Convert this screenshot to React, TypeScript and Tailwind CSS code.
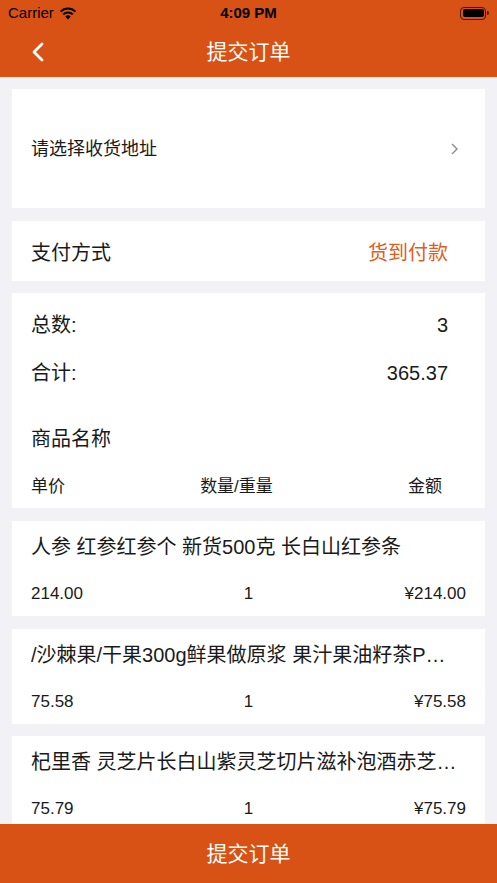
import React from 'react';

type Item = {
  name: string;
  price: string;
  qty: string;
  total: string;
  gap: string;
};

const items: Item[] = [
  { name: '人参 红参红参个 新货500克 长白山红参条', price: '214.00', qty: '1', total: '¥214.00', gap: 'mt-[13px]' },
  { name: '/沙棘果/干果300g鲜果做原浆 果汁果油籽茶P沙棘果原浆', price: '75.58', qty: '1', total: '¥75.58', gap: 'mt-[13px]' },
  { name: '杞里香 灵芝片长白山紫灵芝切片滋补泡酒赤芝片礼盒装', price: '75.79', qty: '1', total: '¥75.79', gap: 'mt-[12px]' },
];

const font = { fontFamily: '"Liberation Sans", "Noto Sans CJK SC", sans-serif' };

const StatusBar: React.FC = () => (
  <div className="relative flex h-[26px] items-center px-[8px] text-[15px] text-black">
    <div className="flex items-center gap-[5px]">
      <span>Carrier</span>
      <svg width="18" height="13" viewBox="0 0 18 13">
        <path d="M9 12.5 L6.3 9.6 A3.9 3.9 0 0 1 11.7 9.6 Z" fill="#000" />
        <path d="M4.2 7.4 A6.8 6.8 0 0 1 13.8 7.4" stroke="#000" strokeWidth="2" fill="none" />
        <path d="M1.6 4.6 A10.5 10.5 0 0 1 16.4 4.6" stroke="#000" strokeWidth="2" fill="none" />
      </svg>
    </div>
    <span className="absolute left-1/2 -translate-x-1/2 font-bold">4:09 PM</span>
    <div className="ml-auto flex items-center">
      <div className="flex h-[13px] w-[26px] items-center rounded-[4px] border border-[#3a1a08] p-[1.5px]">
        <div className="h-full w-full rounded-[2px] bg-black" />
      </div>
      <div className="ml-[1px] h-[4px] w-[2px] rounded-r-sm bg-[#3a1a08]" />
    </div>
  </div>
);

const App: React.FC = () => {
  return (
    <div className="flex h-[883px] w-[497px] flex-col overflow-hidden bg-[#f1f1f6]" style={font}>
      <div className="bg-[#d75214]">
        <StatusBar />
        <div className="relative flex h-[51px] items-center justify-center">
          <svg className="absolute left-[31px]" width="14" height="22" viewBox="0 0 14 22">
            <path d="M11 3 L3 11 L11 19" stroke="#fff" strokeWidth="2.8" fill="none" strokeLinecap="round" strokeLinejoin="round" />
          </svg>
          <span className="text-[21px] text-white">提交订单</span>
        </div>
      </div>

      <div className="flex flex-1 flex-col overflow-hidden px-[12px] text-[#1a1a1a]">
        <div className="mt-[12px] flex h-[119px] shrink-0 items-center justify-between bg-white pl-[19px] pr-[26px]">
          <span className="pt-[2px] text-[18px]">请选择收货地址</span>
          <svg width="9" height="14" viewBox="0 0 9 14">
            <path d="M2 2 L7 7 L2 12" stroke="#8a8a8e" strokeWidth="1.4" fill="none" />
          </svg>
        </div>

        <div className="mt-[13px] flex h-[60px] shrink-0 items-center justify-between bg-white pl-[19px] pr-[37px] pt-[3px] text-[20px]">
          <span>支付方式</span>
          <span className="text-[#e05d21]">货到付款</span>
        </div>

        <div className="mt-[12px] flex h-[215px] shrink-0 flex-col bg-white pl-[19px] pr-[37px] pt-[8px]">
          <div className="flex h-[48px] items-center justify-between text-[20px]">
            <span>总数:</span>
            <span>3</span>
          </div>
          <div className="flex h-[48px] items-center justify-between text-[20px]">
            <span>合计:</span>
            <span>365.37</span>
          </div>
          <div className="mt-[18px] flex h-[48px] items-center text-[20px]">商品名称</div>
          <div className="grid h-[45px] grid-cols-3 items-center pr-[6px] pt-[3px] text-[17px]">
            <span>单价</span>
            <span className="text-center">数量/重量</span>
            <span className="text-right">金额</span>
          </div>
        </div>

        {items.map((it) => (
          <div key={it.total} className={`${it.gap} flex h-[95px] shrink-0 flex-col bg-white pl-[19px] pr-[19px]`}>
            <div className="flex h-[48px] items-center pr-[9px] pt-[3px] text-[20px]">
              <span className="truncate">{it.name}</span>
            </div>
            <div className="grid h-[47px] grid-cols-3 items-center pt-[3px] text-[17px]">
              <span>{it.price}</span>
              <span className="text-center">{it.qty}</span>
              <span className="text-right">{it.total}</span>
            </div>
          </div>
        ))}
      </div>

      <div className="flex h-[59px] shrink-0 items-center justify-center bg-[#d75214] text-[21px] text-white">
        提交订单
      </div>
    </div>
  );
};

export default App;
